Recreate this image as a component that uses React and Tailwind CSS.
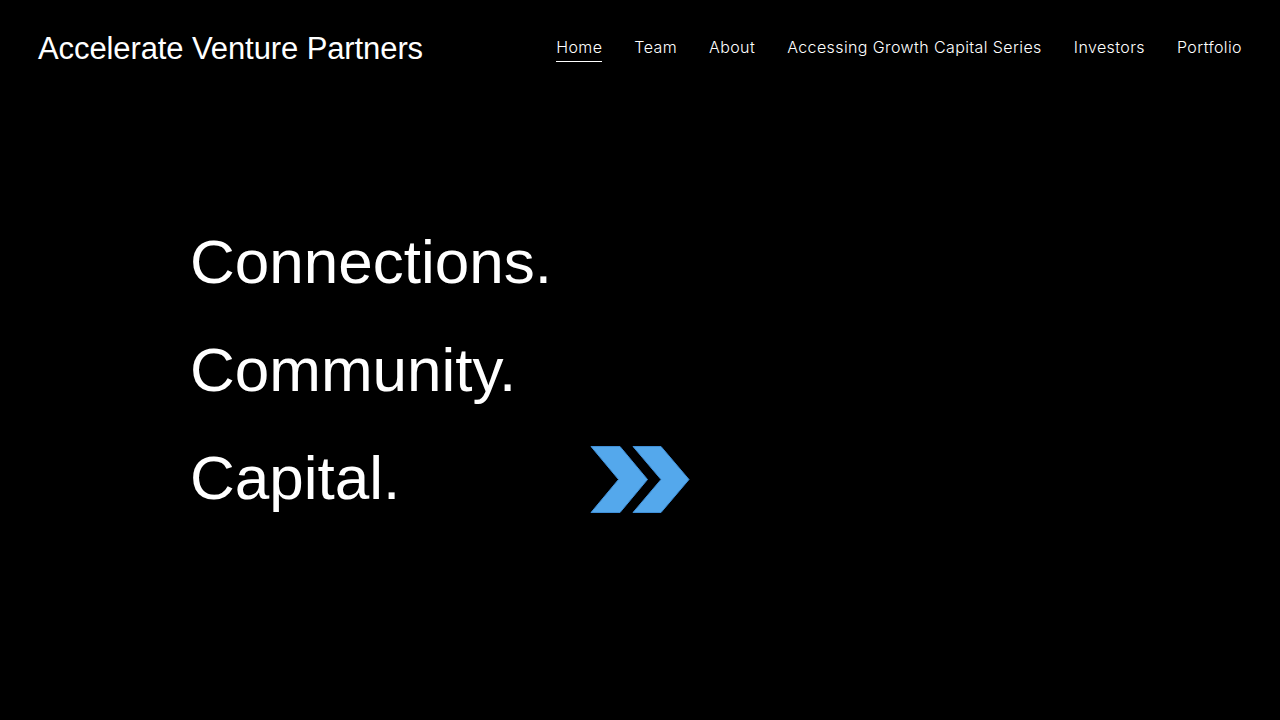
import React from 'react'

const navItems = ['Home', 'Team', 'About', 'Accessing Growth Capital Series', 'Investors', 'Portfolio']

function Chevrons() {
  return (
    <svg width="100" height="67" viewBox="0 0 100 67" className="mt-[22px] shrink-0" aria-hidden="true">
      <polygon points="1,0.5 30,0.5 57.5,33.5 30,66.5 1,66.5 28.5,33.5" fill="#54a8ec" stroke="#3f8ed6" strokeWidth="1" />
      <polygon points="43,0.5 71,0.5 99,33.5 71,66.5 43,66.5 71,33.5" fill="#54a8ec" stroke="#3f8ed6" strokeWidth="1" />
    </svg>
  )
}

export default function App() {
  return (
    <div className="min-h-screen w-full bg-black text-white">
      <header className="flex items-start justify-between px-[38px] pt-[31px]">
        <div className="font-['Liberation_Sans',Arial,sans-serif] text-[31px] leading-[36px] tracking-[-0.1px]">
          Accelerate Venture Partners
        </div>
        <nav className="mt-[4px] flex items-start gap-[32px] font-['Inter',sans-serif] text-[16px] font-light leading-[24px] tracking-[0.4px]">
          {navItems.map((item, i) => (
            <a
              key={item}
              href="#"
              className={
                i === 0
                  ? 'border-b border-white pb-[2px] text-white'
                  : 'border-b border-transparent pb-[2px] text-white'
              }
            >
              {item}
            </a>
          ))}
        </nav>
      </header>

      <main className="pl-[190px] pt-[141px] font-['Liberation_Sans',Arial,sans-serif] text-[62px] leading-[108px]">
        <div>Connections.</div>
        <div>Community.</div>
        <div className="flex items-start">
          <div className="w-[400px]">Capital.</div>
          <Chevrons />
        </div>
      </main>
    </div>
  )
}
